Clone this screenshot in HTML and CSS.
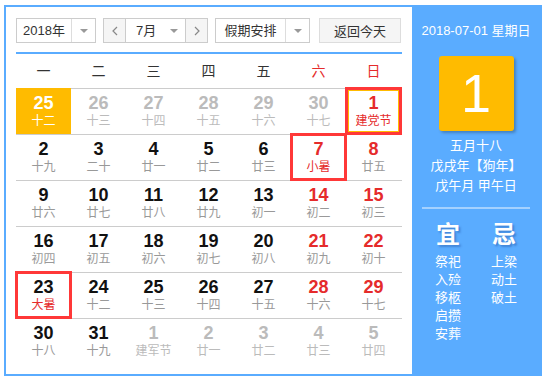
FILE: index.html
```html
<!DOCTYPE html>
<html lang="zh-CN">
<head>
  <meta charset="UTF-8">
  <title>万年历</title>
  <link rel="stylesheet" href="styles.css">
</head>
<body>
  <div class="calendar">
    <div class="main">
      <div class="toolbar">
        <div class="select year-select">
          <span class="select-text">2018年</span>
          <span class="select-arrow"><i class="caret"></i></span>
        </div>
        <div class="select month-select">
          <span class="nav-btn prev">
            <svg width="6" height="10" viewBox="0 0 6 10"><polyline points="5,1 1,5 5,9" fill="none" stroke="#888" stroke-width="1.2"/></svg>
          </span>
          <span class="month-text">7月<i class="caret"></i></span>
          <span class="nav-btn next">
            <svg width="6" height="10" viewBox="0 0 6 10"><polyline points="1,1 5,5 1,9" fill="none" stroke="#888" stroke-width="1.2"/></svg>
          </span>
        </div>
        <div class="select holiday-select">
          <span class="select-text">假期安排</span>
          <span class="select-arrow"><i class="caret"></i></span>
        </div>
        <button class="today-btn">返回今天</button>
      </div>

      <div class="weekdays">
        <span>一</span><span>二</span><span>三</span><span>四</span><span>五</span>
        <span class="red">六</span><span class="red">日</span>
      </div>

      <div class="week">
        <div class="day today"><b>25</b><em>十二</em></div>
        <div class="day other"><b>26</b><em>十三</em></div>
        <div class="day other"><b>27</b><em>十四</em></div>
        <div class="day other"><b>28</b><em>十五</em></div>
        <div class="day other"><b>29</b><em>十六</em></div>
        <div class="day other"><b>30</b><em>十七</em></div>
        <div class="day weekend festival mark selected"><b>1</b><em>建党节</em></div>
      </div>
      <div class="week">
        <div class="day"><b>2</b><em>十九</em></div>
        <div class="day"><b>3</b><em>二十</em></div>
        <div class="day"><b>4</b><em>廿一</em></div>
        <div class="day"><b>5</b><em>廿二</em></div>
        <div class="day"><b>6</b><em>廿三</em></div>
        <div class="day weekend festival mark"><b>7</b><em>小暑</em></div>
        <div class="day weekend"><b>8</b><em>廿五</em></div>
      </div>
      <div class="week">
        <div class="day"><b>9</b><em>廿六</em></div>
        <div class="day"><b>10</b><em>廿七</em></div>
        <div class="day"><b>11</b><em>廿八</em></div>
        <div class="day"><b>12</b><em>廿九</em></div>
        <div class="day"><b>13</b><em>初一</em></div>
        <div class="day weekend"><b>14</b><em>初二</em></div>
        <div class="day weekend"><b>15</b><em>初三</em></div>
      </div>
      <div class="week">
        <div class="day"><b>16</b><em>初四</em></div>
        <div class="day"><b>17</b><em>初五</em></div>
        <div class="day"><b>18</b><em>初六</em></div>
        <div class="day"><b>19</b><em>初七</em></div>
        <div class="day"><b>20</b><em>初八</em></div>
        <div class="day weekend"><b>21</b><em>初九</em></div>
        <div class="day weekend"><b>22</b><em>初十</em></div>
      </div>
      <div class="week">
        <div class="day festival mark"><b>23</b><em>大暑</em></div>
        <div class="day"><b>24</b><em>十二</em></div>
        <div class="day"><b>25</b><em>十三</em></div>
        <div class="day"><b>26</b><em>十四</em></div>
        <div class="day"><b>27</b><em>十五</em></div>
        <div class="day weekend"><b>28</b><em>十六</em></div>
        <div class="day weekend"><b>29</b><em>十七</em></div>
      </div>
      <div class="week">
        <div class="day"><b>30</b><em>十八</em></div>
        <div class="day"><b>31</b><em>十九</em></div>
        <div class="day other"><b>1</b><em>建军节</em></div>
        <div class="day other"><b>2</b><em>廿一</em></div>
        <div class="day other"><b>3</b><em>廿二</em></div>
        <div class="day other"><b>4</b><em>廿三</em></div>
        <div class="day other"><b>5</b><em>廿四</em></div>
      </div>
    </div>

    <div class="side">
      <div class="side-date">2018-07-01 星期日</div>
      <div class="big-day">1</div>
      <div class="lunar-info">
        <p>五月十八</p>
        <p>戊戌年【狗年】</p>
        <p>戊午月 甲午日</p>
      </div>
      <div class="side-line"></div>
      <div class="almanac">
        <div class="almanac-col">
          <h2>宜</h2>
          <p>祭祀</p><p>入殓</p><p>移柩</p><p>启攒</p><p>安葬</p>
        </div>
        <div class="almanac-col">
          <h2>忌</h2>
          <p>上梁</p><p>动土</p><p>破土</p>
        </div>
      </div>
    </div>
  </div>
</body>
</html>
```

FILE: styles.css
```css
* {
  box-sizing: border-box;
}
body {
  margin: 0;
  font-family: "Liberation Sans", "Noto Sans CJK SC", sans-serif;
  background-color: #fff;
  color: #333;
}
.calendar {
  display: flex;
  width: 538px;
  height: 371px;
  margin: 5px 0 0 4px;
  border: 2px solid #5aacff;
}
.main {
  width: 406px;
  padding: 11px 10px 0 10px;
  background-color: #fff;
}

/* toolbar */
.toolbar {
  display: flex;
  height: 25px;
  font-size: 13px;
}
.select {
  display: flex;
  height: 25px;
  border: 1px solid #ccc;
  background-color: #fff;
}
.select-text {
  flex: 1;
  line-height: 23px;
  text-align: center;
}
.select-arrow {
  width: 24px;
  border-left: 1px solid #ddd;
  display: flex;
  align-items: center;
  justify-content: center;
}
.caret {
  display: inline-block;
  width: 0;
  height: 0;
  border-left: 4px solid transparent;
  border-right: 4px solid transparent;
  border-top: 4px solid #999;
}
.year-select {
  width: 80px;
  margin-right: 7px;
}
.month-select {
  width: 105px;
  margin-right: 7px;
}
.holiday-select {
  width: 95px;
  margin-right: 9px;
}
.nav-btn {
  width: 22px;
  background-color: #f5f5f5;
  display: flex;
  align-items: center;
  justify-content: center;
}
.nav-btn.prev {
  border-right: 1px solid #ccc;
}
.nav-btn.next {
  border-left: 1px solid #ccc;
}
.month-text {
  flex: 1;
  line-height: 23px;
  padding-left: 10px;
  display: flex;
  align-items: center;
}
.month-text .caret {
  margin-left: 14px;
}
.today-btn {
  width: 82px;
  height: 25px;
  padding: 0;
  font: inherit;
  font-size: 13px;
  color: #333;
  background-color: #f5f5f5;
  border: 1px solid #ddd;
}

/* grid */
.weekdays {
  display: grid;
  grid-template-columns: repeat(7, 55px);
  margin-top: 9px;
  border-top: 2px solid #5aacff;
  height: 36px;
  line-height: 34px;
  text-align: center;
  font-size: 14px;
  color: #333;
}
.red {
  color: #e52b2b;
}
.week {
  display: grid;
  grid-template-columns: repeat(7, 55px);
  height: 46px;
  border-top: 1px solid #ccc;
}
.week:last-child {
  border-bottom: none;
}
.day {
  position: relative;
  padding-top: 4px;
  text-align: center;
}
.day b {
  display: block;
  font-size: 18px;
  line-height: 20px;
  color: #111;
}
.day em {
  display: block;
  font-style: normal;
  font-size: 12px;
  line-height: 16px;
  color: #999;
}
.day.weekend b {
  color: #e52b2b;
}
.day.festival em {
  color: #e52b2b;
}
.day.other b,
.day.other em {
  color: #bbb;
}
.day.today {
  margin-top: -1px;
  padding-top: 5px;
  background-color: #ffbb00;
}
.day.today b,
.day.today em {
  color: #fff;
}
.day.mark::after {
  content: "";
  position: absolute;
  top: -2px;
  left: -1px;
  right: -1px;
  bottom: -1px;
  border: 3px solid #ff3838;
}
.day.selected::after {
  box-shadow: inset 0 0 0 1px #ffbb00;
}

/* side panel */
.side {
  flex: 1;
  background-color: #5aacff;
  color: #fff;
  text-align: center;
  padding-top: 14px;
}
.side-date {
  font-size: 13px;
  line-height: 20px;
}
.big-day {
  width: 75px;
  height: 75px;
  margin: 15px auto 0;
  background-color: #ffbb00;
  border-radius: 3px;
  box-shadow: 2px 2px 3px rgba(0, 0, 0, 0.25);
  font-size: 54px;
  line-height: 75px;
}
.lunar-info {
  margin-top: 5px;
  font-size: 13px;
  line-height: 20px;
}
.lunar-info p {
  margin: 0;
}
.side-line {
  height: 2px;
  margin: 11px 10px 0;
  background-color: rgba(255, 255, 255, 0.45);
}
.almanac {
  display: flex;
  justify-content: center;
  gap: 30px;
  margin-top: 11px;
}
.almanac-col {
  width: 26px;
}
.almanac-col h2 {
  margin: 0 0 3px;
  font-size: 24px;
  line-height: 30px;
  font-weight: bold;
  text-shadow: 2px 2px 2px rgba(20, 60, 140, 0.35);
}
.almanac-col p {
  margin: 0;
  font-size: 13px;
  line-height: 18px;
  white-space: nowrap;
}
```
